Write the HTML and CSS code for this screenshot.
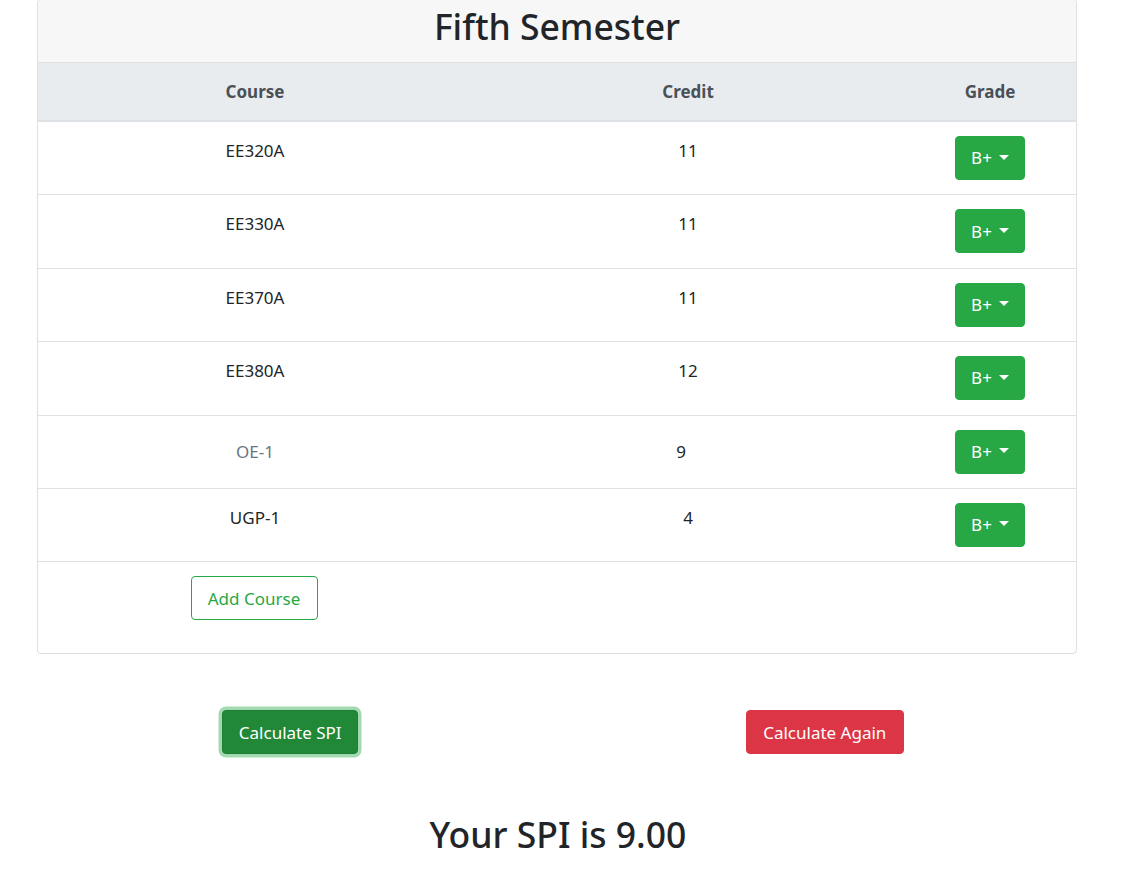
FILE: index.html
```html
<!DOCTYPE html>
<html lang="en">
<head>
<meta charset="utf-8">
<title>SPI Calculator</title>
<link rel="stylesheet" href="styles.css">
</head>
<body>
<div class="card">
  <div class="card-header"><h1 class="title">Fifth Semester</h1></div>
  <div class="table">
    <div class="row head">
      <div class="cell th">Course</div>
      <div class="cell th">Credit</div>
      <div class="cell th">Grade</div>
    </div>
    <div class="row">
      <div class="cell td">EE320A</div>
      <div class="cell td">11</div>
      <div class="cell grade"><button class="btn btn-green">B+<span class="caret"></span></button></div>
    </div>
    <div class="row">
      <div class="cell td">EE330A</div>
      <div class="cell td">11</div>
      <div class="cell grade"><button class="btn btn-green">B+<span class="caret"></span></button></div>
    </div>
    <div class="row">
      <div class="cell td">EE370A</div>
      <div class="cell td">11</div>
      <div class="cell grade"><button class="btn btn-green">B+<span class="caret"></span></button></div>
    </div>
    <div class="row">
      <div class="cell td">EE380A</div>
      <div class="cell td">12</div>
      <div class="cell grade"><button class="btn btn-green">B+<span class="caret"></span></button></div>
    </div>
    <div class="row">
      <div class="cell mid placeholder">OE-1</div>
      <div class="cell mid"><span class="input-val">9</span></div>
      <div class="cell grade"><button class="btn btn-green">B+<span class="caret"></span></button></div>
    </div>
    <div class="row">
      <div class="cell td">UGP-1</div>
      <div class="cell td">4</div>
      <div class="cell grade"><button class="btn btn-green">B+<span class="caret"></span></button></div>
    </div>
    <div class="row last">
      <div class="cell add"><button class="btn btn-outline">Add Course</button></div>
    </div>
  </div>
</div>
<div class="actions">
  <div class="action-col"><button class="btn btn-dark-green">Calculate SPI</button></div>
  <div class="action-col"><button class="btn btn-red">Calculate Again</button></div>
</div>
<h1 class="result">Your SPI is 9.00</h1>
</body>
</html>
```
FILE: styles.css
```css
html, body {
  margin: 0;
  padding: 0;
  background: #fff;
}
body {
  font-family: "Noto Sans", "Open Sans", sans-serif;
  font-size: 17px;
  color: #212529;
  line-height: 1.5;
}
.card {
  width: 1040px;
  box-sizing: border-box;
  margin: -1px 0 0 37px;
  border: 1px solid #dfdfdf;
  border-radius: 4px;
  overflow: hidden;
}
.card-header {
  height: 63px;
  box-sizing: border-box;
  background: #f7f7f7;
  border-bottom: 1px solid #dfdfdf;
  display: flex;
  align-items: center;
  justify-content: center;
  padding-bottom: 9px;
}
.title {
  margin: 0;
  font-size: 35.5px;
  font-weight: 500;
  line-height: 1.2;
  color: #212529;
}
.table {
  display: flex;
  flex-direction: column;
}
.row {
  display: grid;
  grid-template-columns: 434px 432px 1fr;
  border-bottom: 1px solid #dee2e6;
  height: 73.4px;
  box-sizing: border-box;
}
.row.head {
  background: #e9ecef;
  height: 59px;
  border-bottom: 2px solid #dee2e6;
}
.row.last {
  border-bottom: none;
  height: 91px;
}
.cell {
  text-align: center;
}
.th {
  font-weight: 700;
  color: #495057;
  align-self: center;
  padding-top: 1px;
}
.td {
  padding-top: 16px;
}
.mid {
  align-self: center;
  padding-bottom: 0;
}
.placeholder {
  color: #6c757d;
}
.input-val {
  margin-right: 14px;
}
.grade {
  padding-top: 14px;
}
.add {
  padding-top: 14px;
  padding-right: 2px;
}
.btn {
  font-family: inherit;
  font-size: 17px;
  line-height: 1.5;
  height: 44px;
  box-sizing: border-box;
  border: 1px solid transparent;
  border-radius: 4px;
  padding: 0 15px;
  cursor: pointer;
  display: inline-flex;
  align-items: center;
  justify-content: center;
}
.btn-green {
  background: #28a745;
  border-color: #28a745;
  color: #fff;
  width: 70px;
  padding: 0;
}
.caret {
  display: inline-block;
  margin-left: 7px;
  width: 0;
  height: 0;
  border-top: 5.5px solid #fff;
  border-left: 5.5px solid transparent;
  border-right: 5.5px solid transparent;
  margin-top: -2px;
}
.btn-outline {
  background: #fff;
  border-color: #28a745;
  color: #28a745;
  width: 127px;
  padding: 0;
}
.actions {
  display: grid;
  grid-template-columns: 1fr 1fr;
  width: 1069px;
  margin: 56px 0 0 23px;
}
.action-col {
  display: flex;
  justify-content: center;
}
.btn-dark-green {
  background: #218838;
  border-color: #1e7e34;
  color: #fff;
  width: 136px;
  padding: 0;
  box-shadow: 0 0 0 3.5px rgba(72, 180, 97, 0.5);
}
.btn-red {
  background: #dc3545;
  border-color: #dc3545;
  color: #fff;
  width: 158px;
  padding: 0;
}
.result {
  text-align: center;
  margin: 59px 0 0 0;
  padding-right: 6px;
  font-size: 35.5px;
  font-weight: 500;
  line-height: 1.2;
  color: #212529;
}
```
